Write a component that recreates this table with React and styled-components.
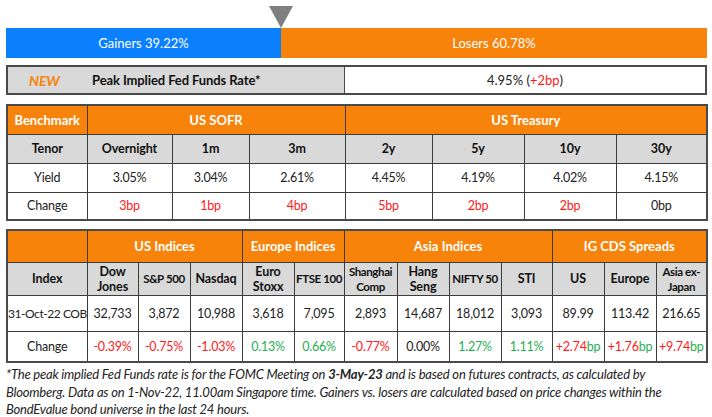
import React from 'react';
import styled, { createGlobalStyle } from 'styled-components';

const GlobalStyle = createGlobalStyle`
  body {
    margin: 0;
    background: #fff;
    font-family: Lato, "Open Sans", sans-serif;
    color: #222;
  }
`;

const ORANGE = '#f8830a';
const GRAY = '#d9d9d9';
const LINE = '#3c3c3c';
const RED = '#ff1a1a';
const GREEN = '#1fb050';

const Page = styled.div`
  width: 712px;
  padding: 0 6px;
  box-sizing: border-box;
`;

const Breadth = styled.div`
  position: relative;
  padding-top: 28px;
`;

const Marker = styled.div`
  position: absolute;
  top: 6px;
  width: 0;
  height: 0;
  border-left: 12px solid transparent;
  border-right: 12px solid transparent;
  border-top: 22px solid #7f7f7f;
  transform: translateX(-50%);
`;

const Bar = styled.div`
  display: flex;
  width: 701px;
  height: 30px;
`;

const Segment = styled.div`
  background: ${p => p.$color};
  color: #fff;
  font-size: 13px;
  display: flex;
  align-items: center;
  justify-content: center;
`;

const FedRow = styled.div`
  display: flex;
  margin-top: 7px;
  height: 30px;
  width: 701px;
  box-sizing: border-box;
  border: 2px solid #4a4a4a;
`;

const FedLabel = styled.div`
  width: 336px;
  background: ${GRAY};
  border-right: 1px solid #4a4a4a;
  display: flex;
  align-items: center;
  font-size: 13px;
  font-weight: 700;
  color: #111;
  letter-spacing: -0.1px;
`;

const NewTag = styled.span`
  color: ${ORANGE};
  font-style: italic;
  width: 84px;
  padding-left: 21px;
  box-sizing: border-box;
  font-size: 14px;
`;

const FedValue = styled.div`
  flex: 1;
  display: flex;
  align-items: center;
  justify-content: center;
  font-size: 13px;
`;

const Table = styled.table`
  margin-top: ${p => p.$gap}px;
  width: 701px;
  table-layout: fixed;
  border-collapse: collapse;
  border: 2px solid #4a4a4a;
  font-size: 12.5px;
  letter-spacing: -0.2px;
`;

const Cell = styled.td`
  border: 1px solid ${LINE};
  text-align: center;
  vertical-align: middle;
  padding: 0;
  height: ${p => p.$h}px;
  box-sizing: border-box;
  color: ${p => p.$color || '#222'};
  white-space: nowrap;
  overflow: visible;
  font-size: ${p => (p.$tight ? '12px' : 'inherit')};
  letter-spacing: ${p => (p.$tight ? '-0.45px' : 'inherit')};
`;

const HeadCell = styled(Cell)`
  background: ${ORANGE};
  color: #fff;
  font-weight: 700;
  font-size: 13px;
  letter-spacing: 0;
`;

const SubCell = styled(Cell)`
  background: ${GRAY};
  color: #111;
  font-weight: 700;
  font-size: ${p => p.$size || 12.5}px;
  line-height: 15px;
  letter-spacing: ${p => (p.$size ? -0.4 : -0.1)}px;
`;

const Footnote = styled.p`
  margin: 3px 0 0;
  font-size: 13px;
  line-height: 17.5px;
  font-style: italic;
  color: #222;
  white-space: nowrap;
  letter-spacing: -0.2px;
`;

const Bp = styled.span`
  color: ${p => p.$color};
`;

const t1Cols = [80, 85, 77, 96, 87, 92, 92, 91];
const t2Cols = [80, 51, 52, 52, 52, 50, 53, 52, 52, 51, 52, 52, 51];

const tenors = ['Overnight', '1m', '3m', '2y', '5y', '10y', '30y'];
const yields = ['3.05%', '3.04%', '2.61%', '4.45%', '4.19%', '4.02%', '4.15%'];
const changes = [
  ['3bp', RED], ['1bp', RED], ['4bp', RED], ['5bp', RED],
  ['2bp', RED], ['2bp', RED], ['0bp', '#222'],
];

const indexNames = [
  ['Dow', 'Jones'], ['S&P 500'], ['Nasdaq'], ['Euro', 'Stoxx'], ['FTSE 100'],
  ['Shanghai', 'Comp'], ['Hang', 'Seng'], ['NIFTY 50'], ['STI'],
  ['US'], ['Europe'], ['Asia ex-', 'Japan'],
];
const levels = ['32,733', '3,872', '10,988', '3,618', '7,095', '2,893', '14,687', '18,012', '3,093', '89.99', '113.42', '216.65'];
const moves = [
  ['-0.39%', RED], ['-0.75%', RED], ['-1.03%', RED], ['0.13%', GREEN], ['0.66%', GREEN],
  ['-0.77%', RED], ['0.00%', '#222'], ['1.27%', GREEN], ['1.11%', GREEN],
];
const cds = ['+2.74', '+1.76', '+9.74'];

export default function App() {
  const gainers = 39.22;
  return (
    <Page>
      <GlobalStyle />
      <Breadth>
        <Marker style={{ left: `${gainers}%` }} />
        <Bar>
          <Segment $color="#0a80ff" style={{ width: `${gainers}%` }}>Gainers 39.22%</Segment>
          <Segment $color={ORANGE} style={{ width: `${100 - gainers}%` }}>Losers 60.78%</Segment>
        </Bar>
      </Breadth>

      <FedRow>
        <FedLabel>
          <NewTag>NEW</NewTag>
          Peak Implied Fed Funds Rate*
        </FedLabel>
        <FedValue>4.95% (<Bp $color={RED}>+2bp</Bp>)</FedValue>
      </FedRow>

      <Table $gap={9}>
        <colgroup>
          {t1Cols.map((w, i) => <col key={i} style={{ width: w }} />)}
        </colgroup>
        <tbody>
          <tr>
            <HeadCell $h={29}>Benchmark</HeadCell>
            <HeadCell $h={29} colSpan={3}>US SOFR</HeadCell>
            <HeadCell $h={29} colSpan={4}>US Treasury</HeadCell>
          </tr>
          <tr>
            <SubCell $h={29}>Tenor</SubCell>
            {tenors.map(t => <SubCell key={t} $h={29}>{t}</SubCell>)}
          </tr>
          <tr>
            <Cell $h={29}>Yield</Cell>
            {yields.map((y, i) => <Cell key={i} $h={29}>{y}</Cell>)}
          </tr>
          <tr>
            <Cell $h={28}>Change</Cell>
            {changes.map(([c, col], i) => <Cell key={i} $h={28} $color={col}>{c}</Cell>)}
          </tr>
        </tbody>
      </Table>

      <Table $gap={8}>
        <colgroup>
          {t2Cols.map((w, i) => <col key={i} style={{ width: w }} />)}
        </colgroup>
        <tbody>
          <tr>
            <HeadCell $h={32} />
            <HeadCell $h={32} colSpan={3}>US Indices</HeadCell>
            <HeadCell $h={32} colSpan={2}>Europe Indices</HeadCell>
            <HeadCell $h={32} colSpan={4}>Asia Indices</HeadCell>
            <HeadCell $h={32} colSpan={3}>IG CDS Spreads</HeadCell>
          </tr>
          <tr>
            <SubCell $h={33}>Index</SubCell>
            {indexNames.map((n, i) => (
              <SubCell key={i} $h={33} $size={n[0].length > 6 ? 11.5 : undefined}>
                {n[0]}{n[1] && <><br />{n[1]}</>}
              </SubCell>
            ))}
          </tr>
          <tr>
            <Cell $h={36} $tight>31-Oct-22 COB</Cell>
            {levels.map((l, i) => <Cell key={i} $h={36}>{l}</Cell>)}
          </tr>
          <tr>
            <Cell $h={31}>Change</Cell>
            {moves.map(([m, col], i) => <Cell key={i} $h={31} $color={col}>{m}</Cell>)}
            {cds.map(c => (
              <Cell key={c} $h={31} $color={RED}>{c}<Bp $color={GREEN}>bp</Bp></Cell>
            ))}
          </tr>
        </tbody>
      </Table>

      <Footnote>
        *The peak implied Fed Funds rate is for the FOMC Meeting on <b>3-May-23</b> and is based on futures contracts, as calculated by<br />
        Bloomberg. Data as on 1-Nov-22, 11.00am Singapore time. Gainers vs. losers are calculated based on price changes within the<br />
        BondEvalue bond universe in the last 24 hours.
      </Footnote>
    </Page>
  );
}
